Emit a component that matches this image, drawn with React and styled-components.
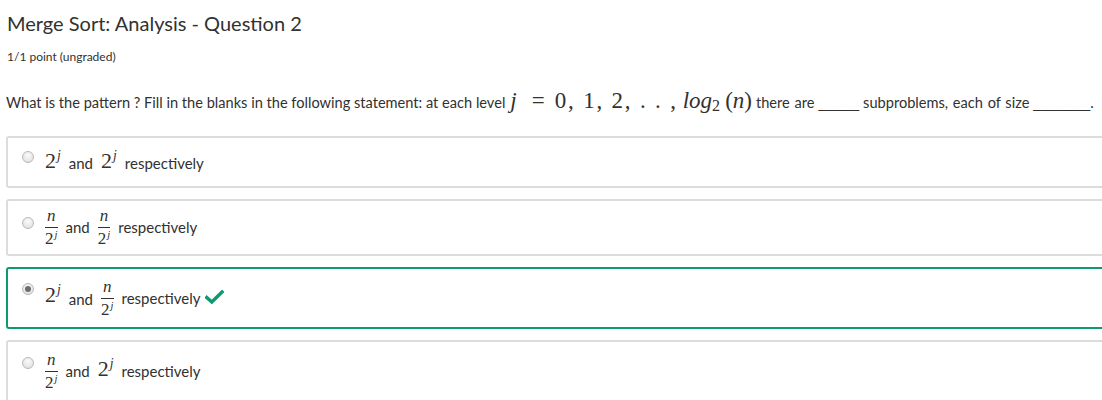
import styled, { createGlobalStyle } from 'styled-components'

const Global = createGlobalStyle`
  body {
    margin: 0;
    background: #fff;
    font-family: Lato, "Noto Sans", sans-serif;
    color: #313131;
    overflow: hidden;
  }
`

const Page = styled.div`
  padding: 9px 0 0 6px;
  overflow: hidden;
`

const Title = styled.h2`
  margin: 0 0 0 1px;
  font-size: 20px;
  font-weight: 400;
  line-height: 28px;
  color: #313131;
`

const Points = styled.div`
  margin: 12px 0 0 1px;
  font-size: 12px;
  line-height: 16px;
  color: #313131;
`

const Question = styled.p`
  margin: 24px 0 0 0;
  font-size: 14.6px;
  line-height: 28px;
  white-space: nowrap;
  display: flex;
  align-items: baseline;
`

const TeX = styled.span`
  font-family: "Liberation Serif", "DejaVu Serif", serif;
  font-size: ${p => p.size || 23}px;
  font-style: ${p => (p.italic ? 'italic' : 'normal')};
  margin: 0 ${p => p.gap || 0}px;
  letter-spacing: ${p => p.spread || 0}px;
  line-height: 1;
`

const Sub = styled.sub`
  font-size: 0.7em;
  font-style: normal;
  vertical-align: -0.2em;
`

const Sup = styled.sup`
  font-size: 0.62em;
  font-style: italic;
  vertical-align: 0.6em;
  margin-left: 1px;
`

const Text = styled.span`
  margin: 0 4px;
  word-spacing: 1px;
`

const Blank = styled.span`
  font-family: "Liberation Sans", sans-serif;
`

const Options = styled.div`
  margin-top: 19px;
  margin-right: -10px;
  display: flex;
  flex-direction: column;
  gap: 11px;
`

const Option = styled.label`
  display: flex;
  align-items: center;
  gap: 11px;
  height: ${p => p.h}px;
  box-sizing: border-box;
  padding-left: 14px;
  border: ${p => (p.correct ? '2px solid #0d9a70' : '2px solid #dcdcdc')};
  border-radius: 3px;
`

const Radio = styled.span`
  align-self: flex-start;
  width: 12px;
  height: 12px;
  flex: none;
  box-sizing: border-box;
  border-radius: 50%;
  border: 1px solid #b9b9b9;
  background: radial-gradient(circle at 50% 35%, #fafafa, #dcdcdc);
  margin-top: ${p => p.top}px;
  display: flex;
  align-items: center;
  justify-content: center;
  &::after {
    content: '';
    display: ${p => (p.checked ? 'block' : 'none')};
    width: 6px;
    height: 6px;
    border-radius: 50%;
    background: #6d6d6d;
  }
`

const Answer = styled.span`
  display: flex;
  align-items: center;
  gap: 8px;
  color: #313131;
  line-height: 1;
  margin-top: ${p => p.shift || 0}px;
`

const Frac = styled.span`
  display: inline-flex;
  flex-direction: column;
  align-items: center;
  font-family: "Liberation Serif", "DejaVu Serif", serif;
  font-size: 17px;
  line-height: 1;
`

const Num = styled.span`
  font-style: italic;
  padding: 0 2px 3px;
  border-bottom: 1px solid #313131;
`

const Den = styled.span`
  padding-top: 2px;
`

const Word = styled.span`
  font-size: 15px;
  margin-top: ${p => p.drop || 0}px;
`

function Pow({ lift = 0 }) {
  return (
    <TeX size={22} style={lift ? { marginTop: -lift } : undefined}>
      2<Sup>j</Sup>
    </TeX>
  )
}

function NOver() {
  return (
    <Frac>
      <Num>n</Num>
      <Den>
        2<Sup>j</Sup>
      </Den>
    </Frac>
  )
}

function Check() {
  return (
    <svg width="19" height="14" viewBox="0 0 19 14" style={{ marginLeft: -4, marginTop: -2 }}>
      <path d="M1.8 7.5 L6.8 12 L17 2" fill="none" stroke="#0d9a70" strokeWidth="3.4" strokeLinecap="square" />
    </svg>
  )
}

export default function App() {
  return (
    <>
      <Global />
      <Page>
        <Title>Merge Sort: Analysis - Question 2</Title>
        <Points>1/1 point (ungraded)</Points>
        <Question>
          What is the pattern ? Fill in the blanks in the following statement: at each level
          <TeX italic gap={5}>j</TeX>
          <TeX gap={10}>=</TeX>
          <TeX spread={1.8}>0, 1, 2, . . ,</TeX>
          <TeX italic gap={5}>
            log<Sub>2</Sub>
          </TeX>
          <TeX>(<i>n</i>)</TeX>
          <Text>there are</Text>
          <Blank>_____</Blank>
          <Text>subproblems, each of size</Text>
          <Blank>_______</Blank>.
        </Question>
        <Options>
          <Option h={52}>
            <Radio top={13} />
            <Answer shift={-2}>
              <Pow /> <Word drop={5}>and</Word> <Pow /> <Word drop={5}>respectively</Word>
            </Answer>
          </Option>
          <Option h={57}>
            <Radio top={16} />
            <Answer>
              <NOver /> <Word>and</Word> <NOver /> <Word>respectively</Word>
            </Answer>
          </Option>
          <Option h={62} correct>
            <Radio top={14} checked />
            <Answer>
              <Pow lift={6} /> <Word drop={3}>and</Word> <NOver /> <Word drop={1}>respectively</Word> <Check />
            </Answer>
          </Option>
          <Option h={62}>
            <Radio top={15} />
            <Answer>
              <NOver /> <Word>and</Word> <Pow lift={4} /> <Word>respectively</Word>
            </Answer>
          </Option>
        </Options>
      </Page>
    </>
  )
}
